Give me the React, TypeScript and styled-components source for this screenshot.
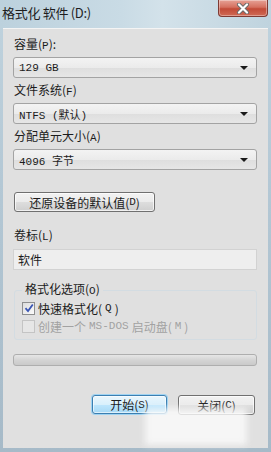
import React from 'react'
import styled, { createGlobalStyle } from 'styled-components'

const GlobalStyle = createGlobalStyle`
    html, body {
        margin: 0;
        padding: 0;
        background: #a9bdca;
    }
    * {
        box-sizing: border-box;
    }
`

const cjk = `"Noto Sans CJK SC", "Noto Sans", sans-serif`
const mono = `"Liberation Mono", "Noto Sans CJK SC", monospace`

const Window = styled.div`
    position: relative;
    width: 271px;
    height: 452px;
    display: flex;
    flex-direction: column;
    padding: 0 3px 4px 3px;
    background: linear-gradient(180deg, #c0d3de 0%, #b4c8d5 40%, #a6bac8 100%);
    font-family: ${cjk};
    color: #1b1b1b;
    overflow: hidden;
`

const TitleBar = styled.div`
    height: 28px;
    display: flex;
    justify-content: space-between;
    align-items: flex-start;
    margin: 0 -3px;
    padding-left: 2px;
    background: linear-gradient(90deg, #bcd1dd 0%, #c9dbe5 45%, #d3e2ea 60%, #bfd3de 100%);
`

const Title = styled.span`
    font-size: 13px;
    line-height: 26px;
    color: #1e1e1e;
    letter-spacing: -0.3px;
`

const CloseButton = styled.div`
    width: 50px;
    height: 17px;
    margin-right: 3px;
    display: flex;
    align-items: center;
    justify-content: center;
    border: 1px solid #7e3a33;
    border-top: none;
    border-radius: 0 0 4px 4px;
    background: linear-gradient(180deg, #e6a195 0%, #d5705f 45%, #c24a37 55%, #cf6a55 100%);
    box-shadow: inset 0 0 0 1px rgba(255, 255, 255, 0.35);
`

const Body = styled.div`
    flex: 1;
    display: flex;
    flex-direction: column;
    padding: 7px 11px 0 10px;
    background: #e0e0e0;
    border-top: 1px solid #f4f4f4;
`

const Label = styled.div<{ $top?: number }>`
    height: 16px;
    line-height: 16px;
    font-size: 12px;
    margin-top: ${p => p.$top ?? 4}px;
    margin-bottom: 5px;
    padding-left: 1px;
`

const Select = styled.div`
    height: 21px;
    display: flex;
    align-items: center;
    justify-content: space-between;
    padding: 0 8px 0 5px;
    border: 1px solid #a3a3a3;
    border-radius: 3px;
    background: linear-gradient(180deg, #f3f3f3 0%, #ebebeb 50%, #dedede 51%, #e6e6e6 100%);
    font-family: ${mono};
    font-size: 11px;
`

const Arrow = styled.span`
    width: 0;
    height: 0;
    border-left: 4px solid transparent;
    border-right: 4px solid transparent;
    border-top: 4px solid #1a1a1a;
`

const Button = styled.div<{ $width: number; $default?: boolean }>`
    width: ${p => p.$width}px;
    height: ${p => (p.$default ? 19 : 20)}px;
    display: flex;
    align-items: center;
    justify-content: center;
    font-size: 12px;
    border-radius: 3px;
    border: 1px solid ${p => (p.$default ? '#3c7fb1' : '#707070')};
    background: ${p =>
        p.$default
            ? 'linear-gradient(180deg, #eaf6fd 0%, #d9f0fc 50%, #bee6fd 51%, #a7d9f5 100%)'
            : 'linear-gradient(180deg, #f2f2f2 0%, #ebebeb 50%, #dddddd 51%, #cfcfcf 100%)'};
    box-shadow: ${p => (p.$default ? '0 0 0 1px #9fd3f2, inset 0 0 0 1px rgba(255,255,255,0.6)' : 'inset 0 0 0 1px rgba(255,255,255,0.7)')};
`

const ResetButton = styled(Button)`
    margin-top: 22px;
    margin-left: 1px;
`

const TextInput = styled.div`
    height: 21px;
    display: flex;
    align-items: center;
    padding-left: 4px;
    margin-top: 1px;
    border: 1px solid #d2d2d2;
    background: #eeeeee;
    font-size: 12px;
`

const GroupBox = styled.fieldset`
    margin: 11px 0 0 1px;
    padding: 0 0 4px 7px;
    border: 1px solid #d3dce2;
    border-radius: 3px;
    display: flex;
    flex-direction: column;
`

const Legend = styled.legend`
    font-size: 12px;
    line-height: 16px;
    padding: 0 3px;
    margin-left: 0;
`

const CheckRow = styled.div<{ $disabled?: boolean }>`
    height: 18px;
    display: flex;
    align-items: center;
    gap: 3px;
    font-size: 12px;
    color: ${p => (p.$disabled ? '#a2a2a2' : '#1b1b1b')};
`

const Box = styled.span<{ $disabled?: boolean }>`
    width: 13px;
    height: 13px;
    display: flex;
    align-items: center;
    justify-content: center;
    border: 1px solid ${p => (p.$disabled ? '#c4c4c4' : '#8e8f8f')};
    background: ${p => (p.$disabled ? '#e6e6e6' : 'linear-gradient(135deg, #dcdcdc, #fbfbfb)')};
`

const Mono = styled.span`
    font-family: ${mono};
    font-size: 11px;
`

const Progress = styled.div`
    height: 12px;
    margin-top: 14px;
    border: 1px solid #aeaeae;
    border-radius: 3px;
    background: linear-gradient(180deg, #e6e6e6 0%, #d4d4d4 50%, #cacaca 100%);
`

const Actions = styled.div`
    display: flex;
    justify-content: flex-end;
    gap: 11px;
    margin-top: 29px;
    padding-right: 2px;
`

const Watermark = styled.div`
    position: absolute;
    left: 145px;
    top: 408px;
    width: 102px;
    height: 37px;
    background: rgba(250, 250, 250, 0.82);
    filter: blur(3px);
`

const Check = () => (
    <svg width="10" height="10" viewBox="0 0 10 10">
        <path d="M1.5 5.2 L4 8 L8.8 1.5" fill="none" stroke="#3a56b4" strokeWidth="1.8" />
    </svg>
)

const CloseX = () => (
    <svg width="14" height="11" viewBox="0 0 14 11">
        <path d="M3 1.5 L11 9.5 M11 1.5 L3 9.5" stroke="#6a6a6a" strokeWidth="4" strokeLinecap="round" />
        <path d="M3 1.5 L11 9.5 M11 1.5 L3 9.5" stroke="#ffffff" strokeWidth="2.2" strokeLinecap="round" />
    </svg>
)

export default function App() {
    return (
        <>
            <GlobalStyle />
            <Window>
                <TitleBar>
                    <Title>格式化 软件 (D:)</Title>
                    <CloseButton><CloseX /></CloseButton>
                </TitleBar>
                <Body>
                    <Label $top={0}>容量(<Mono>P</Mono>):</Label>
                    <Select>129 GB<Arrow /></Select>

                    <Label>文件系统(<Mono>F</Mono>)</Label>
                    <Select>NTFS (默认)<Arrow /></Select>

                    <Label>分配单元大小(<Mono>A</Mono>)</Label>
                    <Select>4096 字节<Arrow /></Select>

                    <ResetButton $width={141}>还原设备的默认值(<Mono>D</Mono>)</ResetButton>

                    <Label $top={15}>卷标(<Mono>L</Mono>)</Label>
                    <TextInput>软件</TextInput>

                    <GroupBox>
                        <Legend>格式化选项(<Mono>O</Mono>)</Legend>
                        <CheckRow>
                            <Box><Check /></Box>
                            快速格式化(<Mono>Q</Mono>)
                        </CheckRow>
                        <CheckRow $disabled>
                            <Box $disabled />
                            创建一个 <Mono>MS-DOS</Mono> 启动盘(<Mono>M</Mono>)
                        </CheckRow>
                    </GroupBox>

                    <Progress />

                    <Actions>
                        <Button $width={75} $default>开始(<Mono>S</Mono>)</Button>
                        <Button $width={77}>关闭(<Mono>C</Mono>)</Button>
                    </Actions>
                </Body>
                <Watermark />
            </Window>
        </>
    )
}
